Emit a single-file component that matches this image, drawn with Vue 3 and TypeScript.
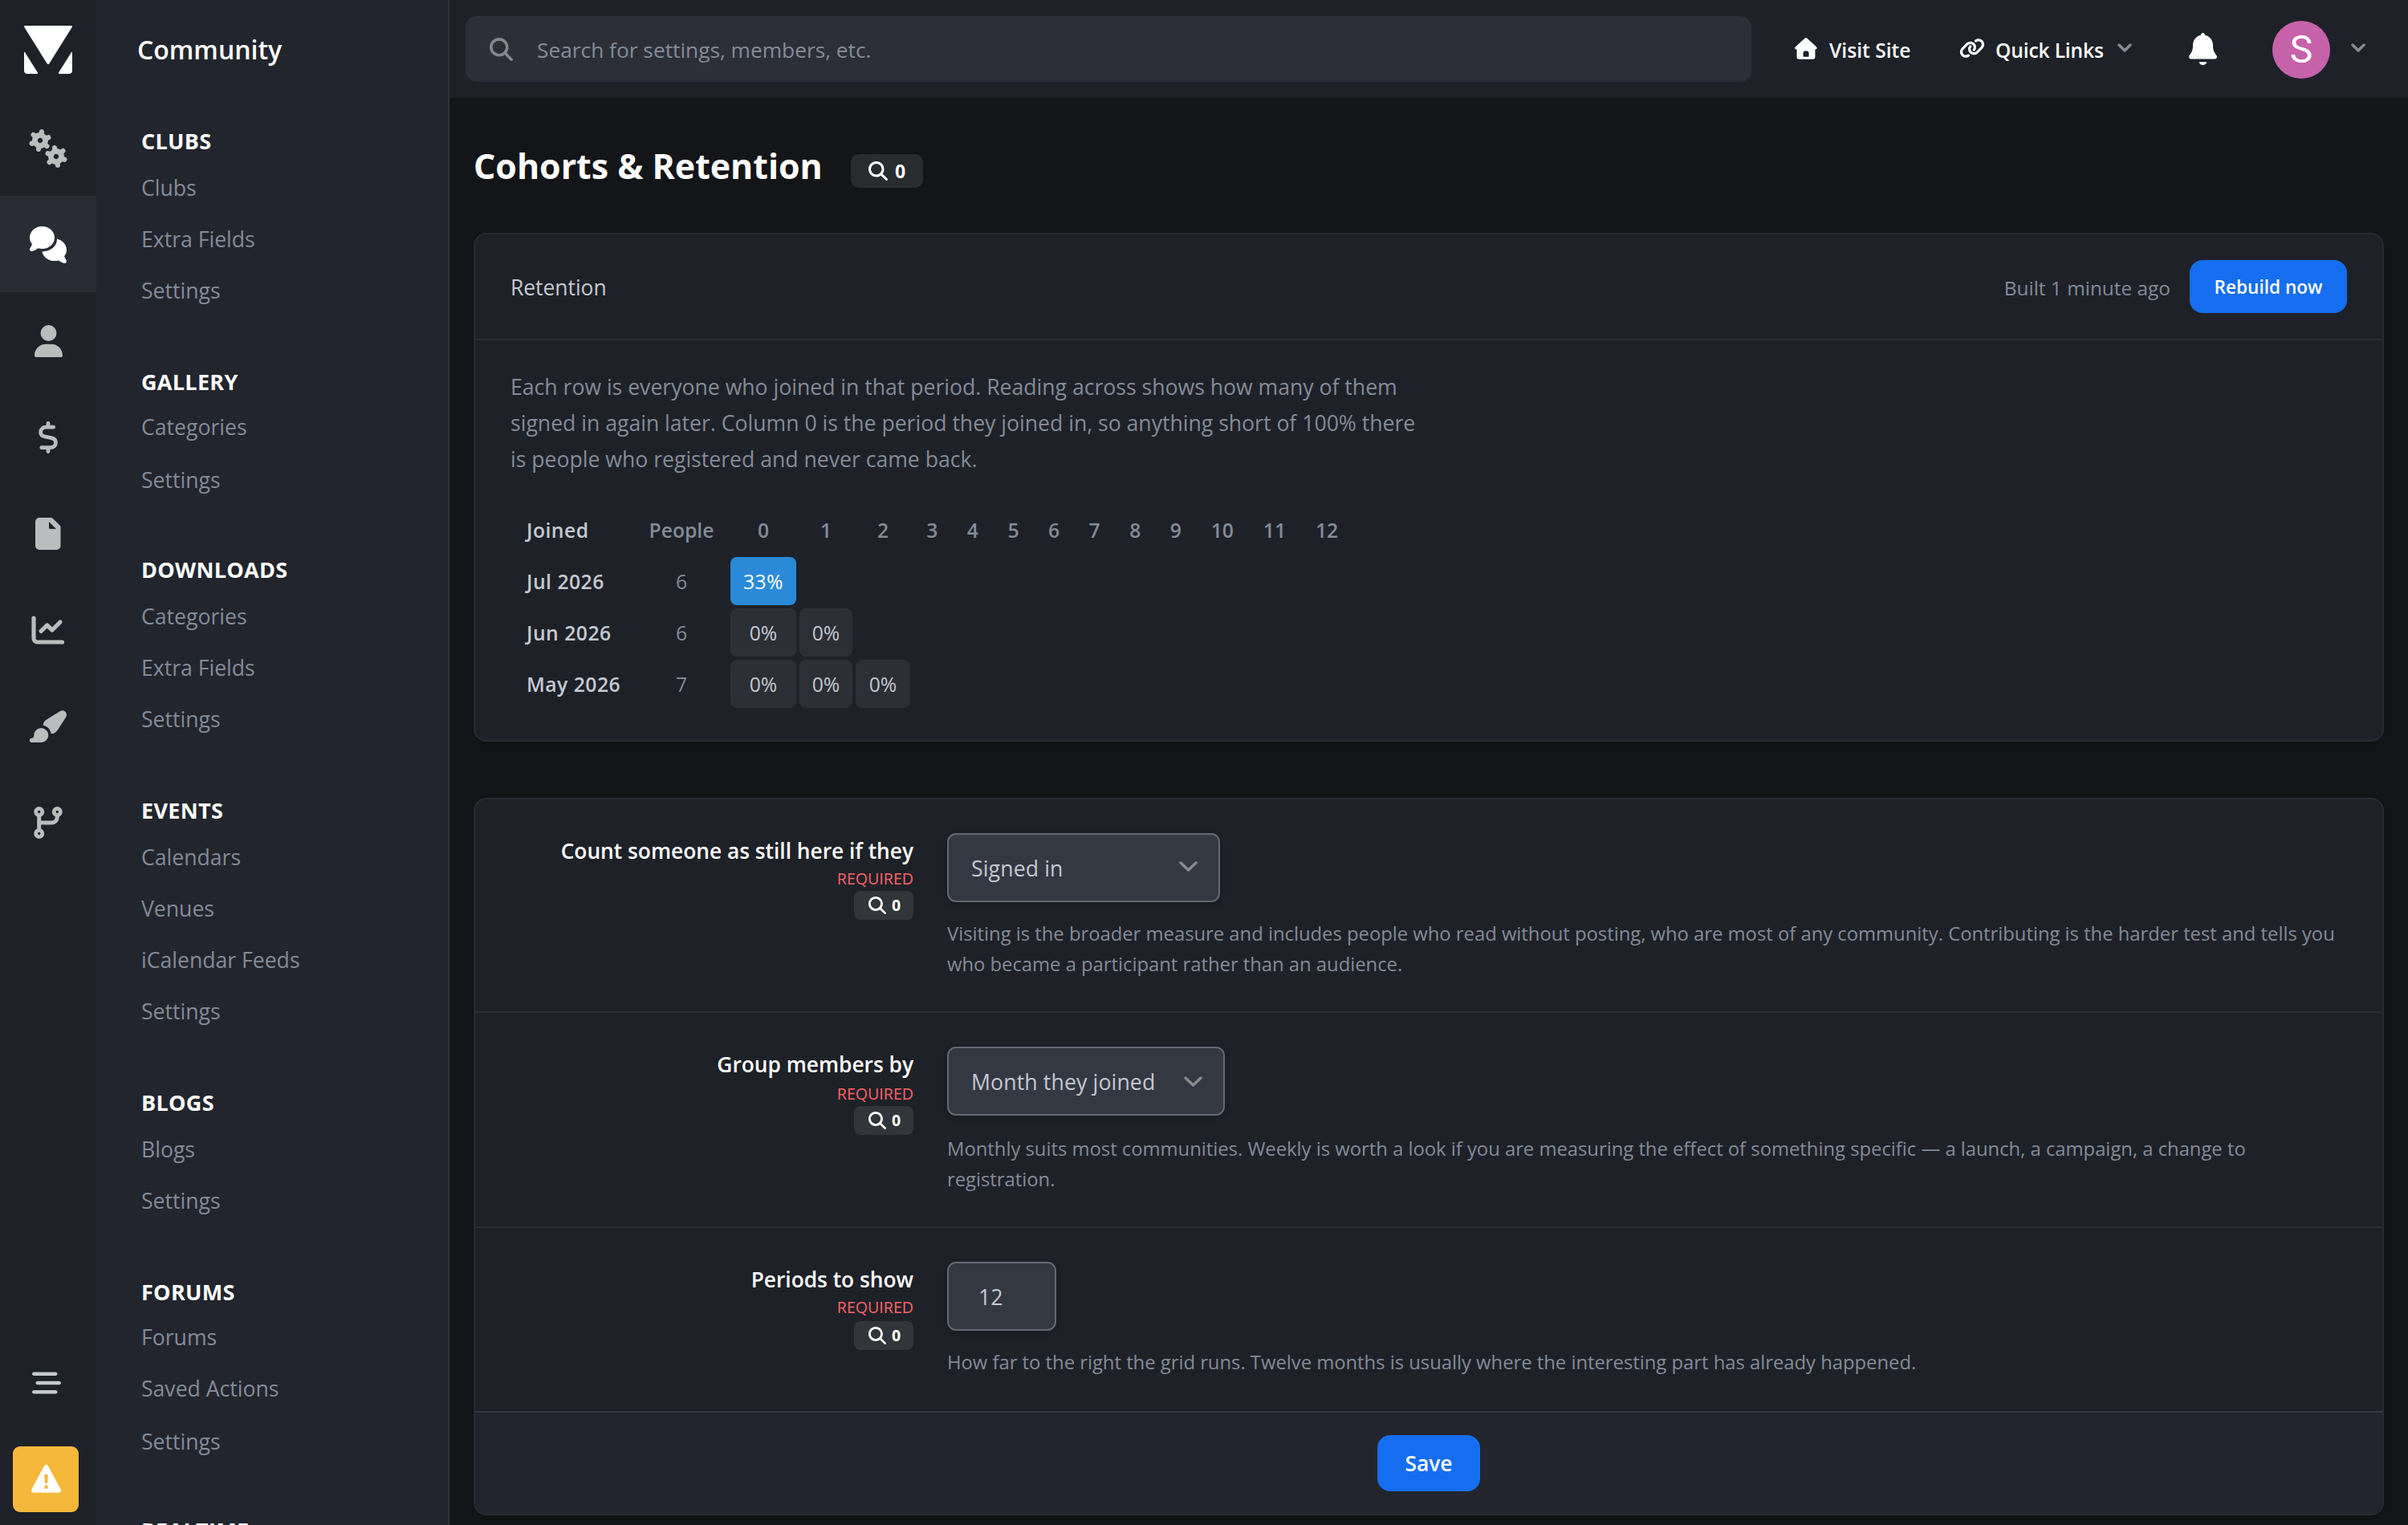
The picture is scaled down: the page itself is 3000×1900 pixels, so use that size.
<script setup lang="ts">
interface Glyph {
  name: string
  width: number
  height: number
}

interface NavGroup {
  title: string
  items: string[]
  snug?: boolean
  short?: boolean
}

interface Cohort {
  label: string
  people: number
  rates: number[]
}

interface Setting {
  key: string
  label: string
  value: string
  kind: 'select' | 'number'
  help: string[]
}

const rail: Glyph[] = [
  { name: 'gears', width: 48, height: 48 },
  { name: 'comments', width: 46, height: 46 },
  { name: 'user', width: 35, height: 40 },
  { name: 'dollar', width: 24, height: 40 },
  { name: 'file', width: 32, height: 40 },
  { name: 'chart', width: 42, height: 36 },
  { name: 'brush', width: 46, height: 40 },
  { name: 'branch', width: 36, height: 40 },
]

const gears = [
  { x: 14, y: 14, start: -80 },
  { x: 34, y: 34, start: 80 },
]
const teeth = [0, 60, 120, 180, 240, 300]

const groups: NavGroup[] = [
  { title: 'CLUBS', items: ['Clubs', 'Extra Fields', 'Settings'] },
  { title: 'GALLERY', items: ['Categories', 'Settings'], snug: true, short: true },
  { title: 'DOWNLOADS', items: ['Categories', 'Extra Fields', 'Settings'] },
  { title: 'EVENTS', items: ['Calendars', 'Venues', 'iCalendar Feeds', 'Settings'] },
  { title: 'BLOGS', items: ['Blogs', 'Settings'] },
  { title: 'FORUMS', items: ['Forums', 'Saved Actions', 'Settings'], snug: true },
  { title: 'REALTIME', items: [] },
]

const periods = Array.from({ length: 13 }, (_, i) => i)

const cohorts: Cohort[] = [
  { label: 'Jul 2026', people: 6, rates: [33] },
  { label: 'Jun 2026', people: 6, rates: [0, 0] },
  { label: 'May 2026', people: 7, rates: [0, 0, 0] },
]

const intro = [
  'Each row is everyone who joined in that period. Reading across shows how many of them',
  'signed in again later. Column 0 is the period they joined in, so anything short of 100% there',
  'is people who registered and never came back.',
]

const settings: Setting[] = [
  {
    key: 'measure',
    label: 'Count someone as still here if they',
    value: 'Signed in',
    kind: 'select',
    help: [
      'Visiting is the broader measure and includes people who read without posting, who are most of any community. Contributing is the harder test and tells you',
      'who became a participant rather than an audience.',
    ],
  },
  {
    key: 'cohort',
    label: 'Group members by',
    value: 'Month they joined',
    kind: 'select',
    help: [
      'Monthly suits most communities. Weekly is worth a look if you are measuring the effect of something specific — a launch, a campaign, a change to',
      'registration.',
    ],
  },
  {
    key: 'periods',
    label: 'Periods to show',
    value: '12',
    kind: 'number',
    help: ['How far to the right the grid runs. Twelve months is usually where the interesting part has already happened.'],
  },
]

const searchPath =
  'M416 208c0 45.9-14.9 88.3-40 122.7L502.6 457.4c12.5 12.5 12.5 32.8 0 45.3s-32.8 12.5-45.3 0L330.7 376c-34.4 25.2-76.8 40-122.7 40C93.1 416 0 322.9 0 208S93.1 0 208 0S416 93.1 416 208zM208 352a144 144 0 1 0 0-288 144 144 0 1 0 0 288z'
</script>

<template>
  <div class="app">
    <nav class="rail">
      <div class="logo">
        <svg width="60" height="60" viewBox="0 0 60 60" fill="#fff">
          <path d="M1.2 0H58.8Q60.6.2 59.6 2L31.7 46.8Q30 49.2 28.3 46.8L.4 2Q-.6.2 1.2 0z" />
          <path d="M0 33.5Q.2 32 1.1 33.2L17 58.6Q17.6 60 16 60H4.500Q0 60 0 55.5z" />
          <path d="M60 33.5Q59.8 32 58.9 33.2L43 58.6Q42.4 60 44 60H55.5Q60 60 60 55.5z" />
        </svg>
      </div>
      <div v-for="g in rail" :key="g.name" class="rail-item" :class="{ active: g.name === 'comments' }">
        <svg
          v-if="g.name !== 'user'"
          :width="g.width"
          :height="g.height"
          :viewBox="`0 0 ${g.width} ${g.height}`"
          fill="none"
          stroke-linecap="round"
          stroke-linejoin="round"
        >
          <template v-if="g.name === 'gears'">
            <g v-for="w in gears" :key="w.x" :transform="`translate(${w.x} ${w.y}) rotate(${w.start})`" stroke="currentColor">
              <circle r="6.6" stroke-width="6.8" />
              <path v-for="t in teeth" :key="t" d="M8 0H11" stroke-width="6.2" :transform="`rotate(${t})`" />
            </g>
          </template>
          <g v-else-if="g.name === 'comments'" fill="currentColor">
            <path d="M15.5 0C24.1 0 31 6.3 31 14S24.1 28 15.5 28C13.7 28 12 27.8 10.4 27.3C8 29.3 5.5 30.6 2.5 31C.7 31.1-.5 29.6.3 27.8L3.1 22.3C1.1 19.9 0 17.1 0 14C0 6.3 6.9 0 15.5 0z" />
            <path d="M34 15.6C41 17.5 46 23 46 29.2c0 2.9-1.1 5.6-3 8l2.7 5.5c.7 1.8-.4 3.3-2.2 3.2c-2.7-.4-5.200-1.500-7.300-3.500c-1.600.4-3.700.7-5.500.7C23.200 43.100 17 38.300 15.400 31.500C26 31.600 34.500 24.600 34 15.600z" />
          </g>
          <g v-else-if="g.name === 'dollar'" stroke="currentColor" stroke-width="4.8">
            <path d="M12 2.5V6M12 34V37.5" />
            <path d="M18.6 7.2H9.4C5.5 7.2 2.6 9.8 2.6 13.2C2.6 16.1 4.6 18.3 7.9 18.9L16 20.7C19.4 21.4 21.5 23.6 21.5 26.6C21.5 30.1 18.6 32.7 14.7 32.7H3.8" />
          </g>
          <path
            v-else-if="g.name === 'file'"
            fill="currentColor"
            fill-rule="evenodd"
            d="M5 0H18.9c1.3 0 2.6.5 3.5 1.5L30 9c1 .9 1.5 2.2 1.5 3.5V35a5 5 0 0 1-5 5H5a5 5 0 0 1-5-5V5a5 5 0 0 1 5-5zM17 5V12.6a1.4 1.4 0 0 0 1.4 1.4H26z"
          />
          <g v-else-if="g.name === 'chart'" stroke="currentColor" stroke-width="5.2">
            <path d="M3 3V28.5a4.500 4.500 0 0 0 4.500 4.500H38.500" />
            <path d="M12 19.3L19.7 12L26 18L36 8" />
          </g>
          <g v-else-if="g.name === 'brush'" fill="currentColor">
            <path d="M14.3 22a9 9 0 0 1 0 18H2.6a2.6 2.6 0 0 1-.9-5.1C4.4 34.7 5.3 33.6 5.3 31A9 9 0 0 1 14.3 22z" />
            <path d="M38 .9C43.700-1.700 48 3.800 45 8.700L34.800 24.400C32.800 27.500 30 29.200 26.600 29.100C26 23.900 22 19.900 16.700 18.800C16.800 15.700 18.300 13.400 21 11.600z" />
          </g>
          <g v-else stroke="currentColor">
            <circle cx="6.7" cy="6.5" r="4.1" stroke-width="4.8" />
            <circle cx="29.3" cy="6.5" r="4.1" stroke-width="4.8" />
            <circle cx="6.7" cy="33.5" r="4.1" stroke-width="4.8" />
            <path d="M6.7 13V27M7 20H22a7 7 0 0 0 7.300-7.500" stroke-width="5" />
          </g>
        </svg>
        <svg v-else width="35" height="40" viewBox="0 0 448 512" fill="currentColor">
          <path d="M224 256A128 128 0 1 0 224 0a128 128 0 1 0 0 256zm-45.7 48C79.8 304 0 383.8 0 482.3C0 498.7 13.3 512 29.7 512H418.3c16.4 0 29.7-13.3 29.7-29.7C448 383.8 368.2 304 269.7 304H178.3z" />
        </svg>
      </div>
      <div class="rail-end">
        <svg width="36" height="36" viewBox="0 0 512 512" fill="#c4c8d0">
          <path d="M0 96C0 78.3 14.3 64 32 64H416c17.7 0 32 14.3 32 32s-14.3 32-32 32H32C14.3 128 0 113.7 0 96zM64 256c0-17.7 14.3-32 32-32H480c17.7 0 32 14.3 32 32s-14.3 32-32 32H96c-17.7 0-32-14.3-32-32zM448 416c0 17.7-14.3 32-32 32H32c-17.7 0-32-14.3-32-32s14.3-32 32-32H416c17.7 0 32 14.3 32 32z" />
        </svg>
        <div class="warning">
          <svg width="37" height="37" viewBox="0 0 512 512" fill="#fff">
            <path d="M256 0c14.7 0 28.2 8.1 35.2 21l216 400c6.7 12.4 6.4 27.4-.8 39.5S486.1 480 472 480L40 480c-14.1 0-27.2-7.4-34.4-19.5s-7.5-27.1-.8-39.5l216-400c7-12.9 20.5-21 35.2-21zm0 352a32 32 0 1 0 0 64 32 32 0 1 0 0-64zm0-192c-18.2 0-32.7 15.5-31.4 33.7l7.4 104c.9 12.5 11.4 22.3 23.9 22.3 12.6 0 23-9.7 23.9-22.3l7.4-104c1.3-18.2-13.1-33.7-31.4-33.7z" />
          </svg>
        </div>
      </div>
    </nav>

    <aside class="sidebar">
      <h2>Community</h2>
      <section v-for="g in groups" :key="g.title" class="group" :class="{ snug: g.snug, short: g.short }">
        <h3>{{ g.title }}</h3>
        <a v-for="item in g.items" :key="item">{{ item }}</a>
      </section>
    </aside>

    <div class="main">
      <header class="topbar">
        <div class="search">
          <svg width="29" height="29" viewBox="0 0 512 512" fill="#85878d"><path :d="searchPath" /></svg>
          <span>Search for settings, members, etc.</span>
        </div>
        <a class="top-link visit">
          <svg width="28" height="27" viewBox="0 0 28 27" fill="#fff">
            <path
              fill-rule="evenodd"
              d="M12.4.7a2.2 2.2 0 0 1 3 0l11.7 10.7c1.2 1.3.5 3-1.2 3.1H25.4V24a2.7 2.7 0 0 1-2.7 2.7H5.2A2.7 2.7 0 0 1 2.5 24V14.5H1.9C.1 14.4-.5 12.6.7 11.4zM10.5 23.8h7v-4.6a2.6 2.6 0 0 0-2.6-2.6h-1.8a2.6 2.6 0 0 0-2.6 2.6z"
            />
          </svg>
          <span>Visit Site</span>
        </a>
        <a class="top-link quick">
          <svg width="32" height="26" viewBox="0 0 640 512" fill="#fff">
            <path d="M579.8 267.7c56.5-56.5 56.5-148 0-204.5c-50-50-128.8-56.5-186.3-15.4l-1.6 1.1c-14.4 10.3-17.7 30.3-7.4 44.6s30.3 17.7 44.6 7.4l1.6-1.1c32.1-22.9 76-19.3 103.8 8.6c31.5 31.5 31.5 82.5 0 114L422.3 334.8c-31.5 31.5-82.5 31.5-114 0c-27.9-27.9-31.5-71.8-8.6-103.8l1.1-1.6c10.3-14.4 6.9-34.4-7.4-44.6s-34.4-6.9-44.6 7.4l-1.1 1.6C206.5 251.2 213 330 263 380c56.5 56.5 148 56.5 204.5 0L579.8 267.7zM60.2 244.3c-56.5 56.5-56.5 148 0 204.5c50 50 128.8 56.5 186.3 15.4l1.6-1.1c14.4-10.3 17.7-30.3 7.4-44.6s-30.3-17.7-44.6-7.4l-1.6 1.1c-32.1 22.9-76 19.3-103.8-8.6C74 372 74 321 105.5 289.5L217.7 177.2c31.5-31.5 82.5-31.5 114 0c27.9 27.9 31.5 71.8 8.6 103.9l-1.1 1.6c-10.3 14.4-6.9 34.4 7.4 44.6s34.4 6.9 44.6-7.4l1.1-1.6C433.5 260.8 427 182 377 132c-56.5-56.5-148-56.5-204.5 0L60.2 244.3z" />
          </svg>
          <span>Quick Links</span>
          <svg class="chevron" width="18" height="12" viewBox="0 0 18 12"><path d="M2 2L9 9L16 2" /></svg>
        </a>
        <svg class="bell" width="35" height="40" viewBox="0 0 448 512" fill="#fff">
          <path d="M224 0c-17.7 0-32 14.3-32 32l0 3.2C119 50 64 114.6 64 192l0 21.7c0 48.1-16.4 94.8-46.4 132.4L7.8 358.3C2.7 364.6 0 372.4 0 380.5 0 400.1 15.9 416 35.5 416l376.9 0c19.6 0 35.5-15.9 35.5-35.5 0-8.1-2.7-15.9-7.8-22.2l-9.8-12.2C400.4 308.5 384 261.8 384 213.7l0-21.7c0-77.4-55-142-128-156.8l0-3.2c0-17.7-14.3-32-32-32zM162 464c7.1 27.6 32.2 48 62 48s54.9-20.4 62-48l-124 0z" />
        </svg>
        <div class="avatar">S</div>
        <svg class="chevron" width="18" height="12" viewBox="0 0 18 12"><path d="M2 2L9 9L16 2" /></svg>
      </header>

      <div class="title-row">
        <h1>Cohorts &amp; Retention</h1>
        <span class="badge badge-lg">
          <svg width="24" height="24" viewBox="0 0 512 512" fill="#fff"><path :d="searchPath" /></svg>
          <b>0</b>
        </span>
      </div>

      <section class="card retention">
        <div class="card-head">
          <span class="card-title">Retention</span>
          <span class="built">Built 1 minute ago</span>
          <button class="rebuild">Rebuild now</button>
        </div>
        <div class="card-body">
          <p class="intro">
            <span v-for="line in intro" :key="line">{{ line }}</span>
          </p>
          <div class="grid">
            <span class="joined">Joined</span>
            <span class="people-head">People</span>
            <span v-for="p in periods" :key="p" class="period">{{ p }}</span>
            <template v-for="c in cohorts" :key="c.label">
              <span class="joined">{{ c.label }}</span>
              <span class="people">{{ c.people }}</span>
              <span v-for="p in periods" :key="p" :class="{ rate: p < c.rates.length, hot: (c.rates[p] ?? 0) > 0 }">{{
                p < c.rates.length ? c.rates[p] + '%' : ''
              }}</span>
            </template>
          </div>
        </div>
      </section>

      <section class="card form">
        <div v-for="s in settings" :key="s.key" class="row" :class="`row-${s.key}`">
          <div class="label-col">
            <span class="label">{{ s.label }}</span>
            <span class="required">REQUIRED</span>
            <span class="badge">
              <svg width="22" height="22" viewBox="0 0 512 512" fill="#fff"><path :d="searchPath" /></svg>
              <b>0</b>
            </span>
          </div>
          <div class="field-col">
            <div class="control">
              <span>{{ s.value }}</span>
              <svg v-if="s.kind === 'select'" class="chevron" width="23" height="14" viewBox="0 0 23 14"><path d="M2 2L11.5 11L21 2" /></svg>
            </div>
            <p class="help">
              <span v-for="line in s.help" :key="line">{{ line }}</span>
            </p>
          </div>
        </div>
        <div class="card-foot">
          <button class="save">Save</button>
        </div>
      </section>
    </div>
  </div>
</template>

<style>
body {
  margin: 0;
  background: #141518;
}
</style>

<style scoped>
.app {
  display: flex;
  width: 3000px;
  height: 1900px;
  overflow: hidden;
  background: #141518;
  color: #c4c9d2;
  font-family: 'Open Sans', 'Noto Sans', sans-serif;
  font-size: 26.6px;
  white-space: nowrap;
}
h1,
h2,
h3,
p {
  margin: 0;
}
svg {
  display: block;
  flex: none;
}
button {
  border: 0;
  padding: 0;
  color: #fff;
  background: #156eef;
  font-family: inherit;
  font-weight: 600;
  border-radius: 16px;
}
.chevron path {
  fill: none;
  stroke: #8a8b8f;
  stroke-width: 3.4;
  stroke-linecap: round;
  stroke-linejoin: round;
}

.rail {
  flex: none;
  width: 120px;
  display: flex;
  flex-direction: column;
  background: #1e2128;
  color: #bbbcbe;
}
.logo {
  height: 92px;
  padding: 32px 30px 0;
  box-sizing: border-box;
  margin-bottom: 32px;
}
.rail-item {
  height: 120px;
  padding-top: 2px;
  box-sizing: border-box;
  display: flex;
  align-items: center;
  justify-content: center;
}
.rail-item.active {
  background: #292c34;
  color: #fff;
}
.rail-end {
  margin-top: auto;
  padding: 0 0 16px 16px;
}
.rail-end > svg {
  margin: 0 0 61px 24px;
}
.warning {
  width: 82px;
  height: 82px;
  border-radius: 9px;
  background: #f5b83a;
  display: flex;
  align-items: center;
  justify-content: center;
}

.sidebar {
  flex: none;
  width: 438px;
  background: #22252d;
  border-right: 2px solid #2e313b;
  color: #848b99;
  overflow: hidden;
}
.sidebar h2 {
  height: 60px;
  line-height: 60px;
  padding: 32px 0 64px 51px;
  color: #fff;
  font-size: 32px;
  font-weight: 600;
}
.group {
  display: flex;
  flex-direction: column;
  padding-left: 56px;
  margin-bottom: 62px;
}
.group h3 {
  height: 40px;
  line-height: 40px;
  margin-bottom: 6px;
  color: #fff;
  font-size: 27px;
  font-weight: 700;
  letter-spacing: 0.3px;
}
.group:last-child {
  margin-top: -65px;
}
.group a {
  height: 64px;
  line-height: 64px;
}
.group.snug h3 {
  margin-bottom: 4px;
}
.group.snug a:last-child {
  margin-top: 2px;
}
.group.short {
  margin-bottom: 60px;
}
.group:last-child {
  margin-top: -3px;
}

.main {
  flex: 1;
  min-width: 0;
}
.topbar {
  height: 122px;
  box-sizing: border-box;
  display: flex;
  align-items: center;
  padding-left: 20px;
  background: #1e2128;
  border-bottom: 2px solid #1d2023;
}
.search {
  width: 1602px;
  height: 82px;
  margin-top: 2px;
  box-sizing: border-box;
  padding-left: 30px;
  display: flex;
  align-items: center;
  border-radius: 14px;
  background: #2c2f38;
  color: #858b98;
}
.search span {
  margin: 2px 0 0 30px;
  font-size: 26.3px;
}
.top-link {
  display: flex;
  align-items: center;
  color: #fff;
  font-weight: 600;
  font-size: 24.6px;
}
.top-link span {
  line-height: 40px;
  margin-top: 6px;
}
.visit {
  width: 205px;
  margin-left: 54px;
}
.visit span {
  margin-left: 15px;
}
.quick span {
  margin-left: 13px;
  width: 136px;
  letter-spacing: -0.15px;
}
.quick .chevron {
  margin-left: 16px;
}
.bell {
  margin: 2px 0 0 71px;
}
.avatar {
  width: 72px;
  height: 72px;
  margin: 4px 26px 0 69px;
  border-radius: 50%;
  background: #c562aa;
  color: #fff;
  font: 48px/72px Roboto, sans-serif;
  text-align: center;
}

.title-row {
  display: flex;
  align-items: flex-start;
  height: 113px;
  padding: 55px 0 0 30px;
}
h1 {
  width: 470px;
  line-height: 60px;
  color: #fff;
  font-size: 42.9px;
  font-weight: 700;
}
.badge {
  width: 74px;
  height: 36px;
  box-sizing: border-box;
  padding-left: 18px;
  display: flex;
  align-items: center;
  gap: 7px;
  border-radius: 8px;
  background: #323539;
  color: #fff;
  font-size: 19.5px;
}
.badge b {
  line-height: 30px;
}
.badge-lg {
  width: 90px;
  height: 42px;
  margin-top: 15px;
  padding-left: 22px;
  gap: 9px;
  border-radius: 10px;
  background: #292c2f;
  font-size: 23px;
}

.card {
  margin: 0 30px;
  width: 2380px;
  box-sizing: border-box;
  border: 2px solid #282b31;
  border-radius: 16px;
  background: #1e2128;
  box-shadow: 0 4px 10px rgba(0, 0, 0, 0.2);
  overflow: hidden;
}
.retention {
  height: 634px;
  margin-bottom: 70px;
}
.card-head {
  height: 130px;
  padding: 0 44px;
  display: flex;
  align-items: center;
  border-bottom: 2px solid #2a2d34;
}
.card-title {
  margin-top: 2px;
  font-size: 26.4px;
}
.built {
  margin: 2px 24px 0 auto;
  color: #848b99;
  font-size: 24.4px;
}
.rebuild {
  width: 196px;
  height: 66px;
  font-size: 22.6px;
}
.card-body {
  padding: 36px 44px 0;
}
.intro {
  display: flex;
  flex-direction: column;
  line-height: 45px;
  color: #848b99;
}
.grid {
  margin-top: 35px;
  display: grid;
  grid-template-columns: 152px 114px 82px 66px 68px repeat(7, 46.6px) repeat(3, 61.2px);
  grid-auto-rows: 60px;
  gap: 4px;
  line-height: 61px;
  text-align: center;
  font-size: 24.7px;
}
.joined {
  text-align: left;
  padding-left: 20px;
  font-weight: 600;
  letter-spacing: 0.5px;
}
.people-head,
.period {
  color: #848b99;
  font-weight: 600;
}
.people {
  color: #848b99;
}
.rate {
  border-radius: 8px;
  background: #2c2f36;
}
.rate.hot {
  background: #2b8ad8;
  color: #fff;
  letter-spacing: 0.4px;
}

.form {
  height: 894px;
}
.row {
  height: 264px;
  display: flex;
  border-bottom: 2px solid #2b2e36;
}
.row-cohort {
  height: 266px;
}
.row-periods {
  height: 228px;
  border-color: #343743;
}
.label-col {
  flex: none;
  width: 546px;
  margin-right: 42px;
  display: flex;
  flex-direction: column;
  align-items: flex-end;
  padding-top: 44px;
}
.label {
  line-height: 40px;
  color: #fff;
  font-weight: 600;
  font-size: 26.3px;
}
.required {
  margin: 2px 0;
  line-height: 26px;
  color: #fb6467;
  font-size: 19.6px;
  font-weight: 500;
}
.row-cohort .required {
  margin-top: 4px;
}
.row-periods .badge {
  margin-top: 2px;
}
.field-col {
  padding-top: 42px;
}
.control {
  height: 86px;
  box-sizing: border-box;
  display: flex;
  align-items: center;
  justify-content: space-between;
  border: 2px solid #656873;
  border-radius: 11px;
  background: #343843;
  box-shadow: 0 2px 6px rgba(0, 0, 0, 0.25);
  padding: 0 26px 0 28px;
}
.control span {
  margin-top: 2px;
  letter-spacing: 0.15px;
}
.control .chevron {
  margin-top: -3px;
}
.row-measure .control {
  width: 340px;
}
.row-cohort .control {
  width: 346px;
}
.row-cohort .chevron {
  margin-top: 1px;
}
.row-periods .control {
  width: 136px;
  padding-left: 37px;
}
.help {
  margin-top: 20px;
  display: flex;
  flex-direction: column;
  line-height: 38px;
  color: #848b99;
  font-size: 23.8px;
}
.row-cohort .help {
  margin-top: 22px;
}
.card-foot {
  height: 130px;
  padding-top: 28px;
  display: flex;
  justify-content: center;
  align-items: flex-start;
  background: #22252d;
}
.save {
  width: 128px;
  height: 70px;
  font-size: 26.4px;
}
</style>
